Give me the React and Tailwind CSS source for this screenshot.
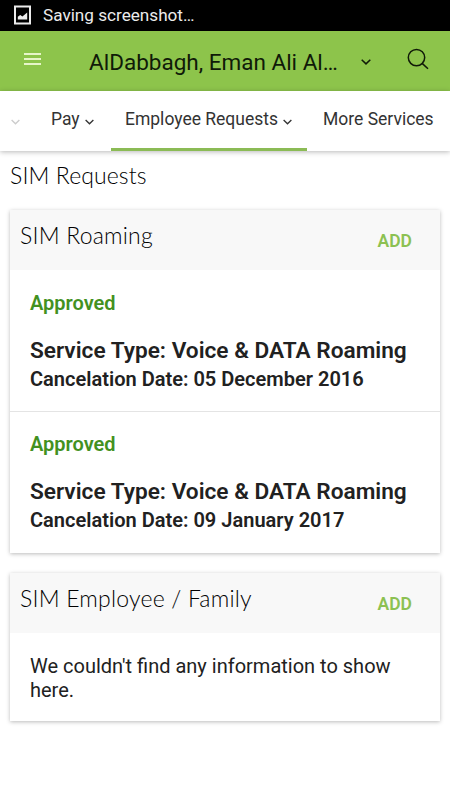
const roaming = [
  { status: "Approved", type: "Voice & DATA Roaming", date: "05 December 2016" },
  { status: "Approved", type: "Voice & DATA Roaming", date: "09 January 2017" },
];

function Chevron({ className }) {
  return (
    <svg viewBox="0 0 10 6" fill="none" stroke="currentColor" strokeWidth="1.5" className={className}>
      <path d="M0.7 0.8 L5 4.9 L9.3 0.8" />
    </svg>
  );
}

function StatusBar() {
  return (
    <div className="flex h-[31px] items-center bg-black pl-[14px] text-[#ececec]">
      <svg viewBox="0 0 17 20" className="-mt-px h-5 w-[17px]">
        <rect x="1" y="1.5" width="15" height="17" fill="none" stroke="currentColor" strokeWidth="2" />
        <path d="M3.8 14.4 V11.8 L6.2 10 L8.4 11.4 L13.2 7.6 V14.4 Z" fill="currentColor" />
      </svg>
      <span className="-mt-[2px] ml-[12px] text-[17.15px] leading-5 whitespace-nowrap">Saving screenshot…</span>
    </div>
  );
}

function Header() {
  return (
    <header className="flex h-[60px] items-center bg-[#8dc44b] text-[#101a08]">
      <button className="ml-6 -mt-1 flex w-[17px] flex-col gap-[3px]">
        <span className="h-[2px] w-full bg-[#e6f5c9]" />
        <span className="h-[2px] w-full bg-[#e6f5c9]" />
        <span className="h-[2px] w-full bg-[#e6f5c9]" />
      </button>
      <h1 className="ml-[48px] w-[250px] pt-px text-[22.5px] leading-7 whitespace-nowrap">
        AlDabbagh, Eman Ali Al…
      </h1>
      <Chevron className="ml-[21.5px] mt-[2px] h-[6px] w-[10px]" />
      <svg viewBox="0 0 22 22" fill="none" stroke="currentColor" strokeWidth="1.5" className="ml-[36px] -mt-1 h-[22px] w-[22px]">
        <circle cx="9.5" cy="9.6" r="8.2" />
        <path d="M15.4 15.6 L21 20.8" />
      </svg>
    </header>
  );
}

function Nav() {
  return (
    <nav className="relative flex h-[60px] bg-white text-[17.5px] leading-6 whitespace-nowrap text-[#333] shadow-[0_1px_5px_rgba(0,0,0,0.28)]">
      <div className="flex w-[51px] items-center pb-[5px] pl-[11px]">
        <Chevron className="mt-[6px] h-[6px] w-[9px] text-[#ccc]" />
      </div>
      <div className="flex w-[60px] items-center pb-[5px]">
        <span className="w-[34px]">Pay</span>
        <Chevron className="mt-[6px] h-[6px] w-[9px]" />
      </div>
      <div className="flex w-[196px] items-center border-b-[3px] border-[#8bbb55] pb-[2px] pl-[14px]">
        <span className="w-[158px]">Employee Requests</span>
        <Chevron className="mt-[6px] h-[6px] w-[9px]" />
      </div>
      <div className="flex items-center pb-[5px] pl-4">More Services</div>
    </nav>
  );
}

function Card({ title, children }) {
  return (
    <section className="mx-[10px] mb-5 bg-white shadow-[0_1px_4px_rgba(0,0,0,0.27)]">
      <div className="flex h-[60px] justify-between bg-[#f8f8f8] pr-7 pl-[10px]">
        <h3 className="pt-[11px] font-['Lato'] text-[23px] leading-7 font-light tracking-[0.2px] text-black">{title}</h3>
        <button className="pt-[2px] text-[17.5px] font-semibold text-[#8cc152]">ADD</button>
      </div>
      {children}
    </section>
  );
}

export default function App() {
  return (
    <div className="min-h-[800px] w-[450px] overflow-hidden bg-white font-['Roboto',sans-serif]">
      <StatusBar />
      <Header />
      <Nav />
      <main>
        <h2 className="pt-[10px] pb-[21px] pl-[10px] font-['Lato'] text-[23px] leading-7 font-light tracking-[0.1px] text-black">
          SIM Requests
        </h2>
        <Card title="SIM Roaming">
          {roaming.map((item) => (
            <div
              key={item.date}
              className="h-[141px] px-5 pt-[21px] font-semibold whitespace-nowrap text-[#212121] last:h-[142px] last:border-t last:border-[#e4e4e4] last:pt-5"
            >
              <p className="text-[20px] leading-6 text-[#43911f]">{item.status}</p>
              <p className="mt-[22px] text-[22.65px] leading-7">Service Type: {item.type}</p>
              <p className="text-[20.05px] leading-7">Cancelation Date: {item.date}</p>
            </div>
          ))}
        </Card>
        <Card title="SIM Employee / Family">
          <p className="px-5 pt-[21px] pb-[19px] text-[20px] leading-6 text-[#212121]">
            We couldn't find any information to show here.
          </p>
        </Card>
      </main>
    </div>
  );
}
